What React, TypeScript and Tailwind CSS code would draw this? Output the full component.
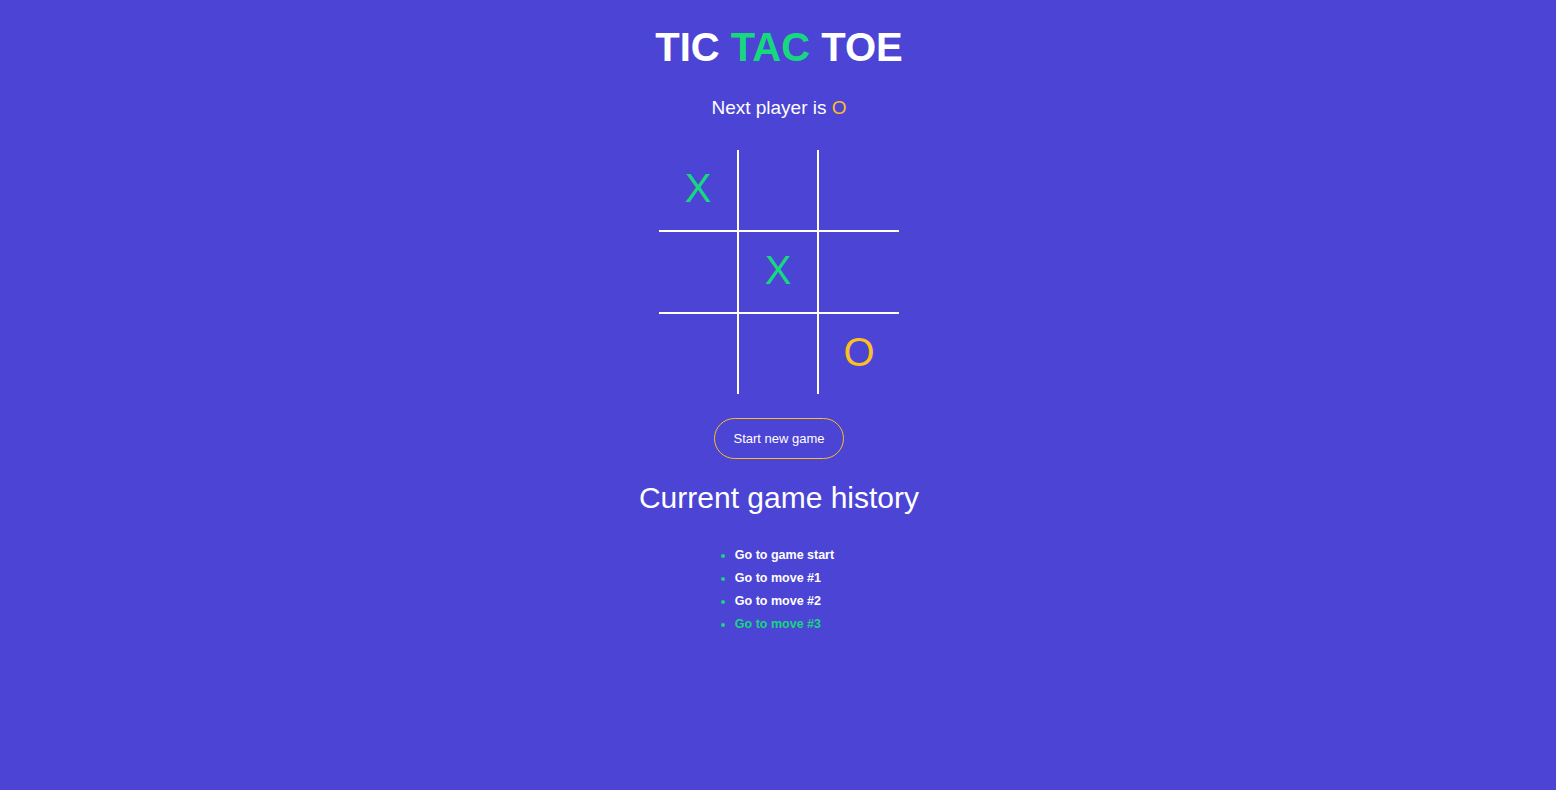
import { useState } from 'react';

type Mark = 'X' | 'O' | null;

const start: Mark[] = ['X', null, null, null, 'X', null, null, null, 'O'];

function Cell({ value, index }: { value: Mark; index: number }) {
  const col = index % 3;
  const row = Math.floor(index / 3);
  return (
    <div
      className={[
        'w-20 flex items-center justify-center pb-1 text-[40px] leading-none',
        col < 2 ? 'border-r-2 border-white' : '',
        row < 2 ? 'h-[82px] border-b-2 border-white' : 'h-20',
        value === 'X' ? 'text-[#17d77f]' : 'text-[#fbbf24]',
      ].join(' ')}
    >
      {value}
    </div>
  );
}

export default function App() {
  const [squares] = useState<Mark[]>(start);
  const moves = ['Go to game start', 'Go to move #1', 'Go to move #2', 'Go to move #3'];

  return (
    <div className="min-h-screen bg-[#4b44d4] text-white font-['Liberation_Sans',Arial,sans-serif] flex flex-col items-center pt-[24px] pl-[2px]">
      <h1 className="text-[40px] leading-[46px] font-bold">
        TIC <span className="text-[#17d77f]">TAC</span> TOE
      </h1>
      <p className="mt-[27px] text-[19px] leading-[22px]">
        Next player is <span className="text-[#fbbf24]">O</span>
      </p>

      <div className="mt-[31px] grid grid-cols-3">
        {squares.map((v, i) => (
          <Cell key={i} value={v} index={i} />
        ))}
      </div>

      <button className="mt-[24px] h-[41px] px-[18px] rounded-full border border-[#fbbf24] text-[13px] text-white">
        Start new game
      </button>

      <h2 className="mt-[22px] text-[30px] leading-[34px]">Current game history</h2>

      <ul className="mt-[29px] w-fit list-disc pl-[11px] marker:text-[#17d77f]">
        {moves.map((m, i) => (
          <li
            key={m}
            className={`text-[12.5px] leading-[23px] font-semibold ${i === moves.length - 1 ? 'text-[#17d77f]' : 'text-white'}`}
          >
            {m}
          </li>
        ))}
      </ul>
    </div>
  );
}
